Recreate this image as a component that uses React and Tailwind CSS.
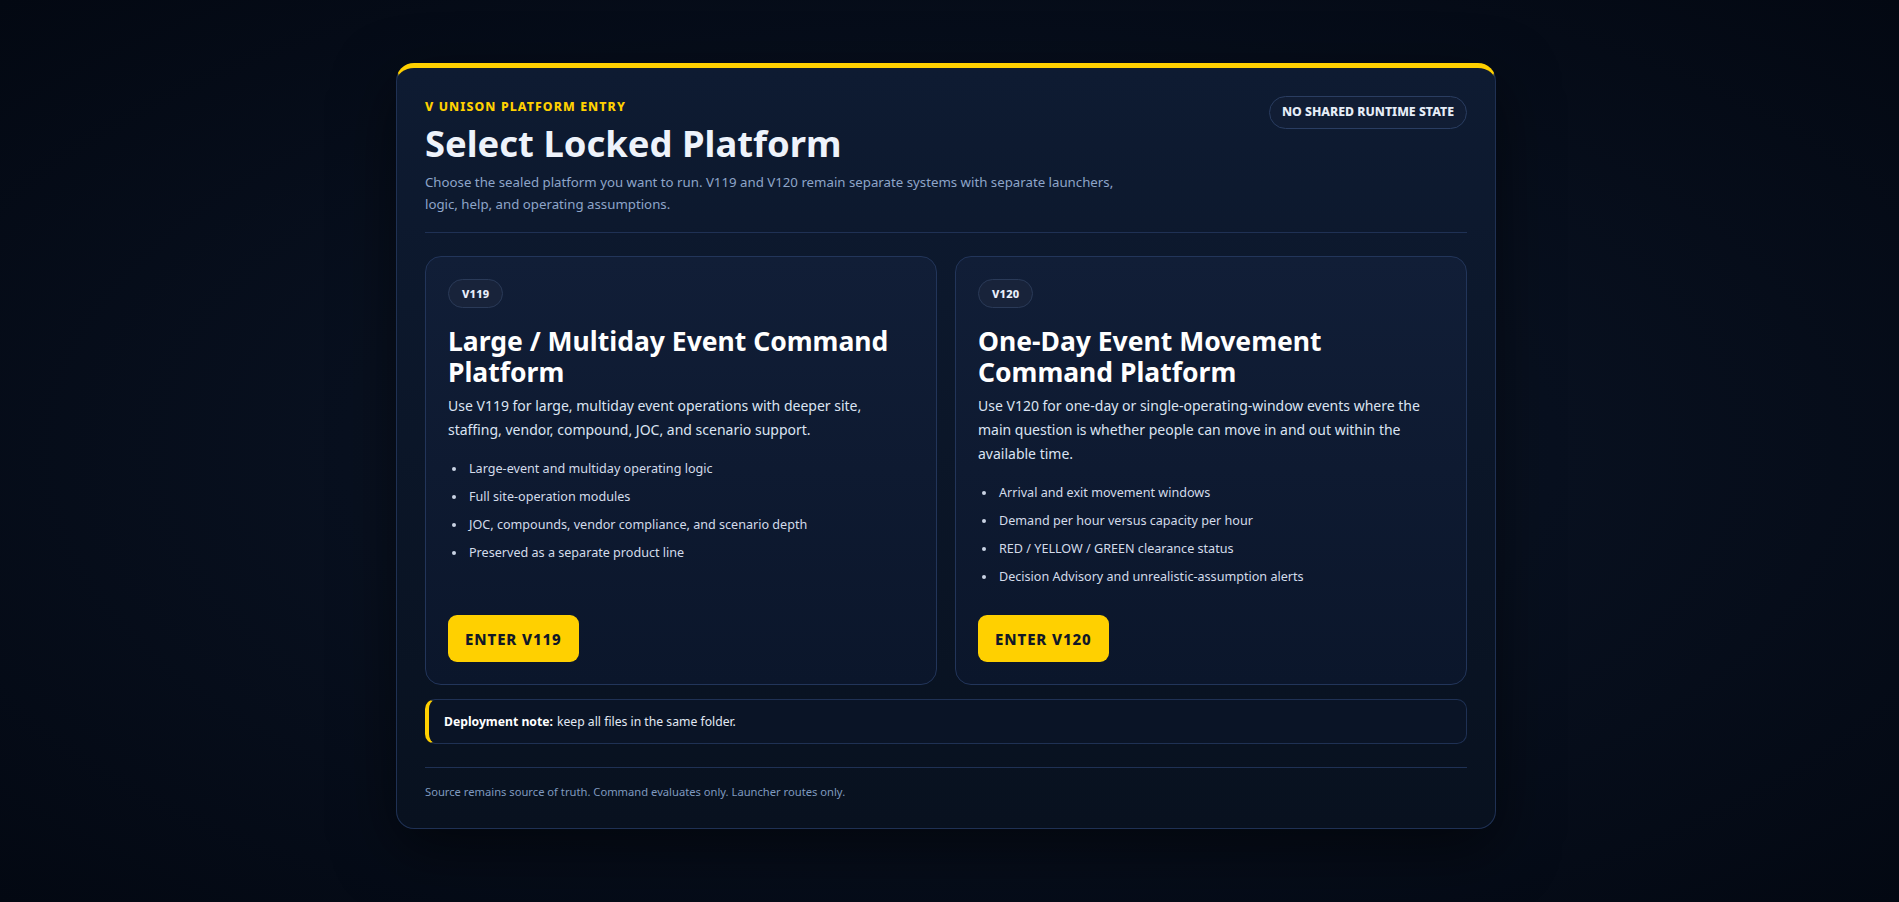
import React from 'react';

const platforms = [
  {
    tag: 'V119',
    title: 'Large / Multiday Event Command Platform',
    desc: 'Use V119 for large, multiday event operations with deeper site, staffing, vendor, compound, JOC, and scenario support.',
    points: [
      'Large-event and multiday operating logic',
      'Full site-operation modules',
      'JOC, compounds, vendor compliance, and scenario depth',
      'Preserved as a separate product line',
    ],
    cta: 'ENTER V119',
  },
  {
    tag: 'V120',
    title: 'One-Day Event Movement Command Platform',
    desc: 'Use V120 for one-day or single-operating-window events where the main question is whether people can move in and out within the available time.',
    points: [
      'Arrival and exit movement windows',
      'Demand per hour versus capacity per hour',
      'RED / YELLOW / GREEN clearance status',
      'Decision Advisory and unrealistic-assumption alerts',
    ],
    cta: 'ENTER V120',
  },
];

const PlatformCard = ({ p }) => (
  <div className="flex flex-col rounded-[16px] border border-[#22355a] bg-gradient-to-b from-[#111e37] to-[#0b162b] p-[22px]">
    <div>
      <span className="inline-flex h-[29px] items-center rounded-full border border-[#2a3a58] bg-[#18233a] px-[13px] text-[11px] font-extrabold tracking-[0.02em] text-[#e8eefa]">
        {p.tag}
      </span>
    </div>
    <h2 className="mt-[18px] text-[26.5px] font-bold leading-[31px] text-white">{p.title}</h2>
    <p className="mt-[6px] text-[14px] leading-[24px] text-[#dbe4f2]">{p.desc}</p>
    <ul className="mt-[17px] flex flex-col gap-[8px] pl-[19px] text-[12.6px] leading-[20px] text-[#d3dcea] list-disc marker:text-[#c9d3e3]">
      {p.points.map((pt) => (
        <li key={pt} className="pl-[2px]">{pt}</li>
      ))}
    </ul>
    <div className="mt-auto pt-[28px]">
      <button className="h-[47px] rounded-[9px] bg-[#ffd000] px-[17px] text-[15px] font-extrabold tracking-[0.06em] text-[#111827]">
        {p.cta}
      </button>
    </div>
  </div>
);

export default function App() {
  return (
    <div
      className="min-h-screen w-full bg-[radial-gradient(ellipse_at_center,#0d1628_0%,#08101f_45%,#030812_100%)] pt-[63px] pb-[74px] pr-[7px]"
      style={{ fontFamily: '"Noto Sans", "Open Sans", sans-serif' }}
    >
      <div className="mx-auto w-[1100px] rounded-[18px] border border-t-[5px] border-[#1f3154] border-t-[#ffd000] bg-gradient-to-b from-[#0e1b32] to-[#08111f] px-[28px] pt-[30px] pb-[27px] shadow-[0_20px_60px_rgba(0,0,0,0.5)]">
        <div className="flex items-start justify-between">
          <div>
            <div className="text-[12.3px] font-extrabold tracking-[0.09em] text-[#ffd000]">V UNISON PLATFORM ENTRY</div>
            <h1 className="mt-[4px] text-[36.4px] font-bold leading-[46px] text-[#eef3fb]">Select Locked Platform</h1>
            <p className="mt-[5px] w-[700px] text-[13.25px] leading-[22px] text-[#8ea5c9]">
              Choose the sealed platform you want to run. V119 and V120 remain separate systems with separate launchers, logic, help, and operating assumptions.
            </p>
          </div>
          <span className="-mt-[2px] inline-flex h-[33px] items-center rounded-full border border-[#2a3d61] bg-[#111d34] px-[12px] text-[12.3px] font-extrabold text-[#e6edf8]">
            NO SHARED RUNTIME STATE
          </span>
        </div>

        <div className="mt-[17px] border-t border-[#1f3154]" />

        <div className="mt-[23px] grid grid-cols-2 gap-[18px]">
          {platforms.map((p) => (
            <PlatformCard key={p.tag} p={p} />
          ))}
        </div>

        <div className="mt-[14px] flex h-[45px] items-center rounded-[10px] border border-[#1f3154] border-l-[4px] border-l-[#ffd000] bg-[#0a1426] px-[15px] text-[12.2px] text-[#e2e9f4]">
          <span className="font-bold text-white">Deployment note:</span>
          <span className="ml-[4px]">keep all files in the same folder.</span>
        </div>

        <div className="mt-[23px] border-t border-[#1f3154]" />

        <p className="mt-[16px] text-[11.2px] text-[#7f99bf]">
          Source remains source of truth. Command evaluates only. Launcher routes only.
        </p>
      </div>
    </div>
  );
}
